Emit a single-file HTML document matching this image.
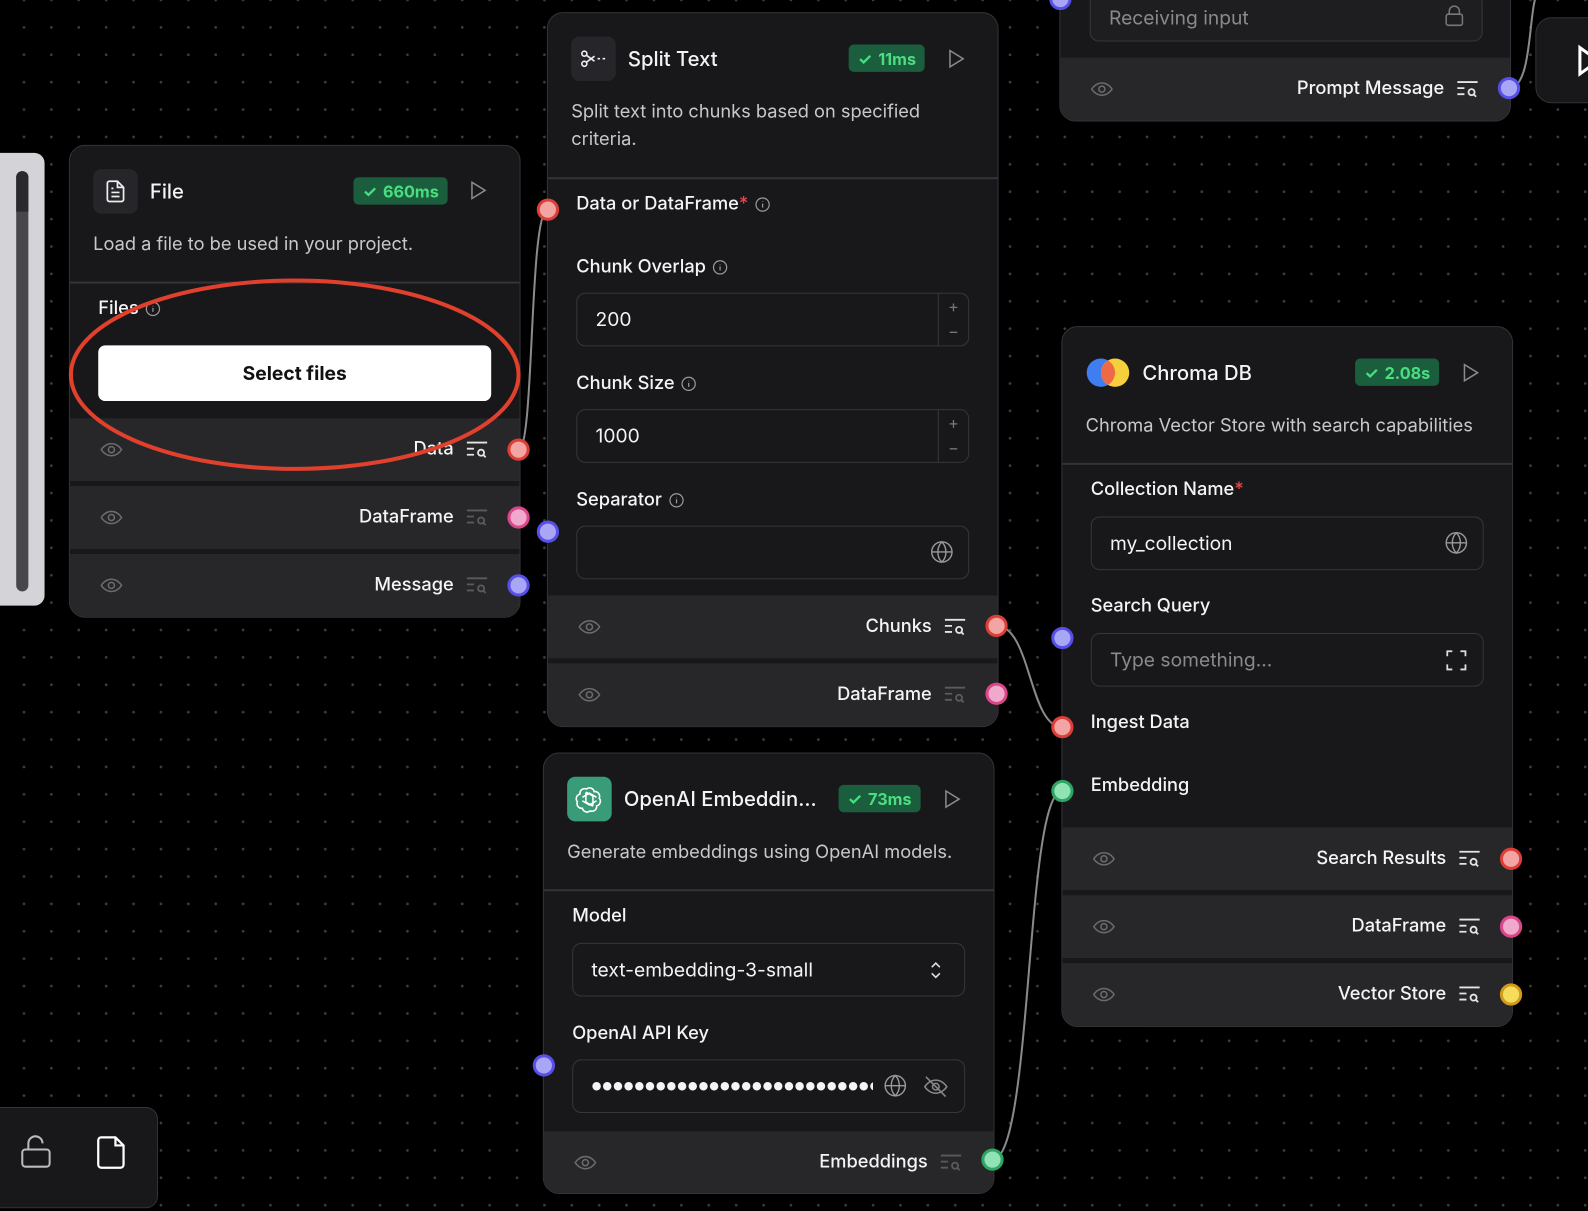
<!DOCTYPE html>
<html><head><meta charset="utf-8"><style>
*{box-sizing:border-box;margin:0;padding:0}
body{width:1588px;height:1196px;overflow:hidden;background:#000;font-family:"Inter","Liberation Sans",sans-serif;position:relative;
background-image:radial-gradient(circle,#3d3d40 1.2px,transparent 1.6px);background-size:27.4px 27.4px;background-position:10.3px -13.7px}
#w{position:absolute;left:0;top:0;width:1568px;height:1181px;transform:scale(1.01276);transform-origin:0 0}
.a{position:absolute}
.node{position:absolute;background:#18181b;border:1.5px solid #333338;border-radius:16px;overflow:hidden}
.ib{position:absolute;width:44px;height:44px;border-radius:8px;background:#26262a;display:flex;align-items:center;justify-content:center}
.title{position:absolute;color:#f4f4f5;font-size:20px;font-weight:500;line-height:24px}
.badge{position:absolute;height:27px;border-radius:5px;background:#1b5e3e;color:#4ade80;font-size:16px;font-weight:700;display:flex;align-items:center;gap:6px;padding:0 9px}
.desc{position:absolute;color:#c8c8cc;font-size:18px;line-height:27px}
.div{position:absolute;left:0;right:0;height:1.5px;background:#333338}
.lbl{position:absolute;color:#f4f4f5;font-size:18px;font-weight:500;line-height:22px;display:flex;align-items:center;gap:6px}
.req{color:#e5484d}
.inp{position:absolute;border:1.5px solid #36363b;border-radius:9px;background:#18181b;color:#f4f4f5;font-size:19px;display:flex;align-items:center;padding-left:18px}
.row{position:absolute;left:0;right:0;height:62px;background:#27272a}
.row .t{position:absolute;right:65px;top:20px;color:#f4f4f5;font-size:18px;font-weight:500;line-height:22px}
.row .eye{position:absolute;left:28px;top:19px}
.row .ins{position:absolute;right:30px;top:19px}
.h{position:absolute;width:22px;height:22px;border-radius:50%;border:3.5px solid}
.r{border-color:#dc3f37;background:#f3a5a3}
.p{border-color:#d9468a;background:#f0a9cc}
.b{border-color:#5650e8;background:#a9a6f5}
.g{border-color:#2fa465;background:#8fe3b5}
.y{border-color:#d29a1c;background:#f5dc5a}
</style></head><body><div id="w">

<svg class="a" style="left:0;top:0" width="1588" height="1196">
<g fill="none" stroke="#8a8a8e" stroke-width="2">
<path d="M512 444 C528 444 522 207 541 207"/>
<path d="M984 618 C1018 618 1016 718 1049 718"/>
<path d="M980 1145 C1020 1145 1012 781 1049 781"/>
<path d="M1490 87 C1515 87 1508 0 1520 -10"/>
</g>
</svg>

<div class="a" style="left:-10px;top:151px;width:54px;height:447px;background:#d4d4d8;border-radius:10px"></div>
<div class="a" style="left:16px;top:169px;width:12px;height:415px;background:#46464b;border-radius:6px"></div>
<div class="a" style="left:16px;top:169px;width:12px;height:40px;background:#2a2a2e;border-radius:6px 6px 0 0"></div>

<div class="node" style="left:68px;top:143px;width:446px;height:467px">
 <div class="ib" style="left:23px;top:23px"><svg width="24" height="24" viewBox="0 0 24 24" fill="none" stroke="#eee" stroke-width="1.7"><path d="M14 2H6a2 2 0 0 0-2 2v16a2 2 0 0 0 2 2h12a2 2 0 0 0 2-2V8z"/><path d="M14 2v6h6M8 13h8M8 17h8M8 9h2"/></svg></div>
 <div class="title" style="left:79px;top:33px">File</div>
 <div class="badge" style="left:280px;top:31px">✓ <span>660ms</span></div>
 <svg class="a" style="left:393px;top:34px" width="20" height="20" viewBox="0 0 20 20" fill="none" stroke="#8a8a8e" stroke-width="1.5"><path d="M4 2l13 8-13 8z"/></svg>
 <div class="desc" style="left:23px;top:84px">Load a file to be used in your project.</div>
 <div class="div" style="top:134px"></div>
 <div class="lbl" style="left:28px;top:150px">Files <svg width="16" height="16" viewBox="0 0 16 16" fill="none" stroke="#999" stroke-width="1.2"><circle cx="8" cy="8" r="6.5"/><path d="M8 7v4M8 5v.5"/></svg></div>
 <div class="a" style="left:28px;top:197px;width:388px;height:55px;background:#fff;border-radius:7px;color:#111;font-size:19px;font-weight:700;display:flex;align-items:center;justify-content:center">Select files</div>
 <div class="row" style="top:269px"><svg class="eye" width="26" height="24" viewBox="0 0 24 24" fill="none" stroke="#6b6b70" stroke-width="1.5"><path d="M2 12s3.5-6 10-6 10 6 10 6-3.5 6-10 6S2 12 2 12z"/><circle cx="12" cy="12" r="3"/></svg><div class="t">Data</div><svg class="ins" width="24" height="24" viewBox="0 0 24 24" fill="none" stroke="#e4e4e7" stroke-width="1.8"><path d="M2 5h20M2 11h7M2 17h7"/><circle cx="16" cy="15" r="3"/><path d="M18.2 17.2l2.3 2.3"/></svg></div>
 <div class="row" style="top:336px"><svg class="eye" width="26" height="24" viewBox="0 0 24 24" fill="none" stroke="#6b6b70" stroke-width="1.5"><path d="M2 12s3.5-6 10-6 10 6 10 6-3.5 6-10 6S2 12 2 12z"/><circle cx="12" cy="12" r="3"/></svg><div class="t">DataFrame</div><svg class="ins" width="24" height="24" viewBox="0 0 24 24" fill="none" stroke="#5a5a5f" stroke-width="1.8"><path d="M2 5h20M2 11h7M2 17h7"/><circle cx="16" cy="15" r="3"/><path d="M18.2 17.2l2.3 2.3"/></svg></div>
 <div class="row" style="top:403px"><svg class="eye" width="26" height="24" viewBox="0 0 24 24" fill="none" stroke="#6b6b70" stroke-width="1.5"><path d="M2 12s3.5-6 10-6 10 6 10 6-3.5 6-10 6S2 12 2 12z"/><circle cx="12" cy="12" r="3"/></svg><div class="t">Message</div><svg class="ins" width="24" height="24" viewBox="0 0 24 24" fill="none" stroke="#5a5a5f" stroke-width="1.8"><path d="M2 5h20M2 11h7M2 17h7"/><circle cx="16" cy="15" r="3"/><path d="M18.2 17.2l2.3 2.3"/></svg></div>
</div>

<div class="node" style="left:540px;top:12px;width:446px;height:706px">
 <div class="ib" style="left:23px;top:23px"><svg width="26" height="20" viewBox="0 0 26 20" fill="none" stroke="#eee" stroke-width="1.6"><circle cx="4" cy="5" r="2.5"/><circle cx="4" cy="15" r="2.5"/><path d="M6 6.5l8 6M6 13.5l8-6M17 10h2.5M22 10h2.5"/></svg></div>
 <div class="title" style="left:79px;top:33px">Split Text</div>
 <div class="badge" style="left:297px;top:31px">✓ <span>11ms</span></div>
 <svg class="a" style="left:393px;top:35px" width="20" height="20" viewBox="0 0 20 20" fill="none" stroke="#8a8a8e" stroke-width="1.5"><path d="M4 2l13 8-13 8z"/></svg>
 <div class="desc" style="left:23px;top:84px;width:380px">Split text into chunks based on specified criteria.</div>
 <div class="div" style="top:162px"></div>
 <div class="lbl" style="left:28px;top:178px">Data or DataFrame<span class="req" style="margin-left:-6px">*</span><svg width="16" height="16" viewBox="0 0 16 16" fill="none" stroke="#999" stroke-width="1.2"><circle cx="8" cy="8" r="6.5"/><path d="M8 7v4M8 5v.5"/></svg></div>
 <div class="lbl" style="left:28px;top:240px">Chunk Overlap <svg width="16" height="16" viewBox="0 0 16 16" fill="none" stroke="#999" stroke-width="1.2"><circle cx="8" cy="8" r="6.5"/><path d="M8 7v4M8 5v.5"/></svg></div>
 <div class="inp" style="left:28px;top:276px;width:388px;height:53px">200<div class="a" style="right:0;top:0;width:30px;height:100%;border-left:1.5px solid #36363b;color:#777;font-size:16px;text-align:center;line-height:25px">+<br>−</div></div>
 <div class="lbl" style="left:28px;top:355px">Chunk Size <svg width="16" height="16" viewBox="0 0 16 16" fill="none" stroke="#999" stroke-width="1.2"><circle cx="8" cy="8" r="6.5"/><path d="M8 7v4M8 5v.5"/></svg></div>
 <div class="inp" style="left:28px;top:391px;width:388px;height:53px">1000<div class="a" style="right:0;top:0;width:30px;height:100%;border-left:1.5px solid #36363b;color:#777;font-size:16px;text-align:center;line-height:25px">+<br>−</div></div>
 <div class="lbl" style="left:28px;top:470px">Separator <svg width="16" height="16" viewBox="0 0 16 16" fill="none" stroke="#999" stroke-width="1.2"><circle cx="8" cy="8" r="6.5"/><path d="M8 7v4M8 5v.5"/></svg></div>
 <div class="inp" style="left:28px;top:506px;width:388px;height:53px"><svg class="a" style="right:14px;top:13px" width="24" height="24" viewBox="0 0 24 24" fill="none" stroke="#999" stroke-width="1.4"><circle cx="12" cy="12" r="10"/><path d="M2 12h20M12 2c3 3 4 6.5 4 10s-1 7-4 10c-3-3-4-6.5-4-10s1-7 4-10z"/></svg></div>
 <div class="row" style="top:575px"><svg class="eye" width="26" height="24" viewBox="0 0 24 24" fill="none" stroke="#6b6b70" stroke-width="1.5"><path d="M2 12s3.5-6 10-6 10 6 10 6-3.5 6-10 6S2 12 2 12z"/><circle cx="12" cy="12" r="3"/></svg><div class="t">Chunks</div><svg class="ins" width="24" height="24" viewBox="0 0 24 24" fill="none" stroke="#e4e4e7" stroke-width="1.8"><path d="M2 5h20M2 11h7M2 17h7"/><circle cx="16" cy="15" r="3"/><path d="M18.2 17.2l2.3 2.3"/></svg></div>
 <div class="row" style="top:642px"><svg class="eye" width="26" height="24" viewBox="0 0 24 24" fill="none" stroke="#6b6b70" stroke-width="1.5"><path d="M2 12s3.5-6 10-6 10 6 10 6-3.5 6-10 6S2 12 2 12z"/><circle cx="12" cy="12" r="3"/></svg><div class="t">DataFrame</div><svg class="ins" width="24" height="24" viewBox="0 0 24 24" fill="none" stroke="#5a5a5f" stroke-width="1.8"><path d="M2 5h20M2 11h7M2 17h7"/><circle cx="16" cy="15" r="3"/><path d="M18.2 17.2l2.3 2.3"/></svg></div>
</div>

<div class="node" style="left:536px;top:743px;width:446px;height:436px">
 <div class="ib" style="left:23px;top:23px;background:#3a9b78"><svg width="28" height="28" viewBox="0 0 24 24" fill="none" stroke="#fff" stroke-width="1.3"><path d="M9.5 3.5a4 4 0 0 1 6.5 2.2a4 4 0 0 1 4.3 5.5a4 4 0 0 1-2.2 6.5a4 4 0 0 1-5.5 4.3a4 4 0 0 1-6.5-2.2a4 4 0 0 1-4.3-5.5a4 4 0 0 1 2.2-6.5a4 4 0 0 1 5.5-4.3z"/><path d="M9 6.5v8l6 3.5M15 17.5V9.5l-6-3.5M6 10.5l6-3.5 6 3.5v0M18 13.5l-6 3.5-6-3.5"/></svg></div>
 <div class="title" style="left:79px;top:33px">OpenAI Embeddin...</div>
 <div class="badge" style="left:291px;top:31px">✓ <span>73ms</span></div>
 <svg class="a" style="left:393px;top:35px" width="20" height="20" viewBox="0 0 20 20" fill="none" stroke="#8a8a8e" stroke-width="1.5"><path d="M4 2l13 8-13 8z"/></svg>
 <div class="desc" style="left:23px;top:84px">Generate embeddings using OpenAI models.</div>
 <div class="div" style="top:134px"></div>
 <div class="lbl" style="left:28px;top:150px">Model</div>
 <div class="inp" style="left:28px;top:187px;width:388px;height:53px">text-embedding-3-small<svg class="a" style="right:20px;top:16px" width="16" height="20" viewBox="0 0 16 20" fill="none" stroke="#ddd" stroke-width="1.6"><path d="M4 7l4-4 4 4M4 13l4 4 4-4"/></svg></div>
 <div class="lbl" style="left:28px;top:266px">OpenAI API Key</div>
 <div class="inp" style="left:28px;top:302px;width:388px;height:53px;font-size:11px;letter-spacing:0.5px"><span style="display:block;width:278px;overflow:hidden;white-space:nowrap">●●●●●●●●●●●●●●●●●●●●●●●●●●●●●●●●●●</span>
  <svg class="a" style="right:56px;top:13px" width="24" height="24" viewBox="0 0 24 24" fill="none" stroke="#999" stroke-width="1.4"><circle cx="12" cy="12" r="10"/><path d="M2 12h20M12 2c3 3 4 6.5 4 10s-1 7-4 10c-3-3-4-6.5-4-10s1-7 4-10z"/></svg>
  <svg class="a" style="right:14px;top:13px" width="28" height="26" viewBox="0 0 24 24" fill="none" stroke="#888" stroke-width="1.4"><path d="M2 12s3.5-6 10-6 10 6 10 6-3.5 6-10 6S2 12 2 12z"/><circle cx="12" cy="12" r="3"/><path d="M3 3l18 18"/></svg></div>
 <div class="row" style="top:373px"><svg class="eye" width="26" height="24" viewBox="0 0 24 24" fill="none" stroke="#6b6b70" stroke-width="1.5"><path d="M2 12s3.5-6 10-6 10 6 10 6-3.5 6-10 6S2 12 2 12z"/><circle cx="12" cy="12" r="3"/></svg><div class="t">Embeddings</div><svg class="ins" width="24" height="24" viewBox="0 0 24 24" fill="none" stroke="#5a5a5f" stroke-width="1.8"><path d="M2 5h20M2 11h7M2 17h7"/><circle cx="16" cy="15" r="3"/><path d="M18.2 17.2l2.3 2.3"/></svg></div>
</div>

<div class="node" style="left:1046px;top:-30px;width:446px;height:150px">
 <div class="inp" style="left:29px;top:22px;width:388px;height:48px;color:#8a8a8e;background:#1e1e21">Receiving input<svg class="a" style="right:16px;top:10px" width="22" height="24" viewBox="0 0 22 24" fill="none" stroke="#777" stroke-width="1.5"><rect x="3" y="10" width="16" height="11" rx="2"/><path d="M6 10V7a5 5 0 0 1 10 0v3"/></svg></div>
 <div class="row" style="top:86px"><svg class="eye" width="26" height="24" viewBox="0 0 24 24" fill="none" stroke="#6b6b70" stroke-width="1.5"><path d="M2 12s3.5-6 10-6 10 6 10 6-3.5 6-10 6S2 12 2 12z"/><circle cx="12" cy="12" r="3"/></svg><div class="t">Prompt Message</div><svg class="ins" width="24" height="24" viewBox="0 0 24 24" fill="none" stroke="#e4e4e7" stroke-width="1.8"><path d="M2 5h20M2 11h7M2 17h7"/><circle cx="16" cy="15" r="3"/><path d="M18.2 17.2l2.3 2.3"/></svg></div>
</div>
<div class="node" style="left:1516px;top:17px;width:100px;height:85px;background:#18181b"><svg class="a" style="left:40px;top:26px" width="24" height="32" viewBox="0 0 24 32" fill="none" stroke="#fff" stroke-width="3"><path d="M3 3l18 13-18 13z"/></svg></div>

<div class="node" style="left:1048px;top:322px;width:446px;height:692px">
 <div class="ib" style="left:23px;top:23px;background:transparent"><svg width="44" height="30" viewBox="0 0 44 30"><circle cx="15" cy="15" r="14" fill="#3f7ef0"/><circle cx="29" cy="15" r="14" fill="#f5cf3c"/><path d="M22 2.9a14 14 0 0 1 0 24.2a14 14 0 0 1 0-24.2z" fill="#ee6a45"/></svg></div>
 <div class="title" style="left:79px;top:33px">Chroma DB</div>
 <div class="badge" style="left:289px;top:31px">✓ <span>2.08s</span></div>
 <svg class="a" style="left:393px;top:35px" width="20" height="20" viewBox="0 0 20 20" fill="none" stroke="#8a8a8e" stroke-width="1.5"><path d="M4 2l13 8-13 8z"/></svg>
 <div class="desc" style="left:23px;top:84px">Chroma Vector Store with search capabilities</div>
 <div class="div" style="top:134px"></div>
 <div class="lbl" style="left:28px;top:150px">Collection Name<span class="req" style="margin-left:-6px">*</span></div>
 <div class="inp" style="left:28px;top:187px;width:388px;height:53px">my_collection<svg class="a" style="right:14px;top:13px" width="24" height="24" viewBox="0 0 24 24" fill="none" stroke="#999" stroke-width="1.4"><circle cx="12" cy="12" r="10"/><path d="M2 12h20M12 2c3 3 4 6.5 4 10s-1 7-4 10c-3-3-4-6.5-4-10s1-7 4-10z"/></svg></div>
 <div class="lbl" style="left:28px;top:265px">Search Query</div>
 <div class="inp" style="left:28px;top:302px;width:388px;height:53px;color:#8a8a8e">Type something...<svg class="a" style="right:16px;top:16px" width="20" height="20" viewBox="0 0 20 20" fill="none" stroke="#ddd" stroke-width="1.8"><path d="M1 6V1h5M14 1h5v5M19 14v5h-5M6 19H1v-5"/></svg></div>
 <div class="lbl" style="left:28px;top:380px">Ingest Data</div>
 <div class="lbl" style="left:28px;top:442px">Embedding</div>
 <div class="row" style="top:494px"><svg class="eye" width="26" height="24" viewBox="0 0 24 24" fill="none" stroke="#6b6b70" stroke-width="1.5"><path d="M2 12s3.5-6 10-6 10 6 10 6-3.5 6-10 6S2 12 2 12z"/><circle cx="12" cy="12" r="3"/></svg><div class="t">Search Results</div><svg class="ins" width="24" height="24" viewBox="0 0 24 24" fill="none" stroke="#e4e4e7" stroke-width="1.8"><path d="M2 5h20M2 11h7M2 17h7"/><circle cx="16" cy="15" r="3"/><path d="M18.2 17.2l2.3 2.3"/></svg></div>
 <div class="row" style="top:561px"><svg class="eye" width="26" height="24" viewBox="0 0 24 24" fill="none" stroke="#6b6b70" stroke-width="1.5"><path d="M2 12s3.5-6 10-6 10 6 10 6-3.5 6-10 6S2 12 2 12z"/><circle cx="12" cy="12" r="3"/></svg><div class="t">DataFrame</div><svg class="ins" width="24" height="24" viewBox="0 0 24 24" fill="none" stroke="#e4e4e7" stroke-width="1.8"><path d="M2 5h20M2 11h7M2 17h7"/><circle cx="16" cy="15" r="3"/><path d="M18.2 17.2l2.3 2.3"/></svg></div>
 <div class="row" style="top:628px"><svg class="eye" width="26" height="24" viewBox="0 0 24 24" fill="none" stroke="#6b6b70" stroke-width="1.5"><path d="M2 12s3.5-6 10-6 10 6 10 6-3.5 6-10 6S2 12 2 12z"/><circle cx="12" cy="12" r="3"/></svg><div class="t">Vector Store</div><svg class="ins" width="24" height="24" viewBox="0 0 24 24" fill="none" stroke="#e4e4e7" stroke-width="1.8"><path d="M2 5h20M2 11h7M2 17h7"/><circle cx="16" cy="15" r="3"/><path d="M18.2 17.2l2.3 2.3"/></svg></div>
</div>

<div class="a" style="left:-20px;top:1093px;width:176px;height:100px;background:#18181b;border:1.5px solid #333338;border-radius:12px"></div>
<svg class="a" style="left:20px;top:1120px" width="32" height="36" viewBox="0 0 32 36" fill="none" stroke="#bbb" stroke-width="2"><rect x="2" y="15" width="27" height="17" rx="3"/><path d="M8 15V9a7 7 0 0 1 14 0"/></svg>
<svg class="a" style="left:95px;top:1121px" width="32" height="34" viewBox="0 0 32 34" fill="none" stroke="#fff" stroke-width="2.2"><path d="M5 2h14l8 8v19a3 3 0 0 1-3 3H5a3 3 0 0 1-3-3V5a3 3 0 0 1 3-3z"/><path d="M19 2v8h8"/></svg>

<div class="h r" style="left:501px;top:433px"></div>
<div class="h p" style="left:501px;top:500px"></div>
<div class="h b" style="left:501px;top:567px"></div>
<div class="h r" style="left:530px;top:196px"></div>
<div class="h b" style="left:530px;top:514px"></div>
<div class="h r" style="left:973px;top:607px"></div>
<div class="h p" style="left:973px;top:674px"></div>
<div class="h b" style="left:526px;top:1041px"></div>
<div class="h g" style="left:969px;top:1134px"></div>
<div class="h b" style="left:1038px;top:619px"></div>
<div class="h r" style="left:1038px;top:707px"></div>
<div class="h g" style="left:1038px;top:770px"></div>
<div class="h r" style="left:1481px;top:837px"></div>
<div class="h p" style="left:1481px;top:904px"></div>
<div class="h y" style="left:1481px;top:971px"></div>
<div class="h b" style="left:1479px;top:76px"></div>
<div class="h b" style="left:1036px;top:-12px"></div>

<svg class="a" style="left:0;top:0" width="600" height="500"><ellipse cx="291" cy="370" rx="221" ry="93" fill="none" stroke="#e0402c" stroke-width="4"/></svg>
</div></body></html>
